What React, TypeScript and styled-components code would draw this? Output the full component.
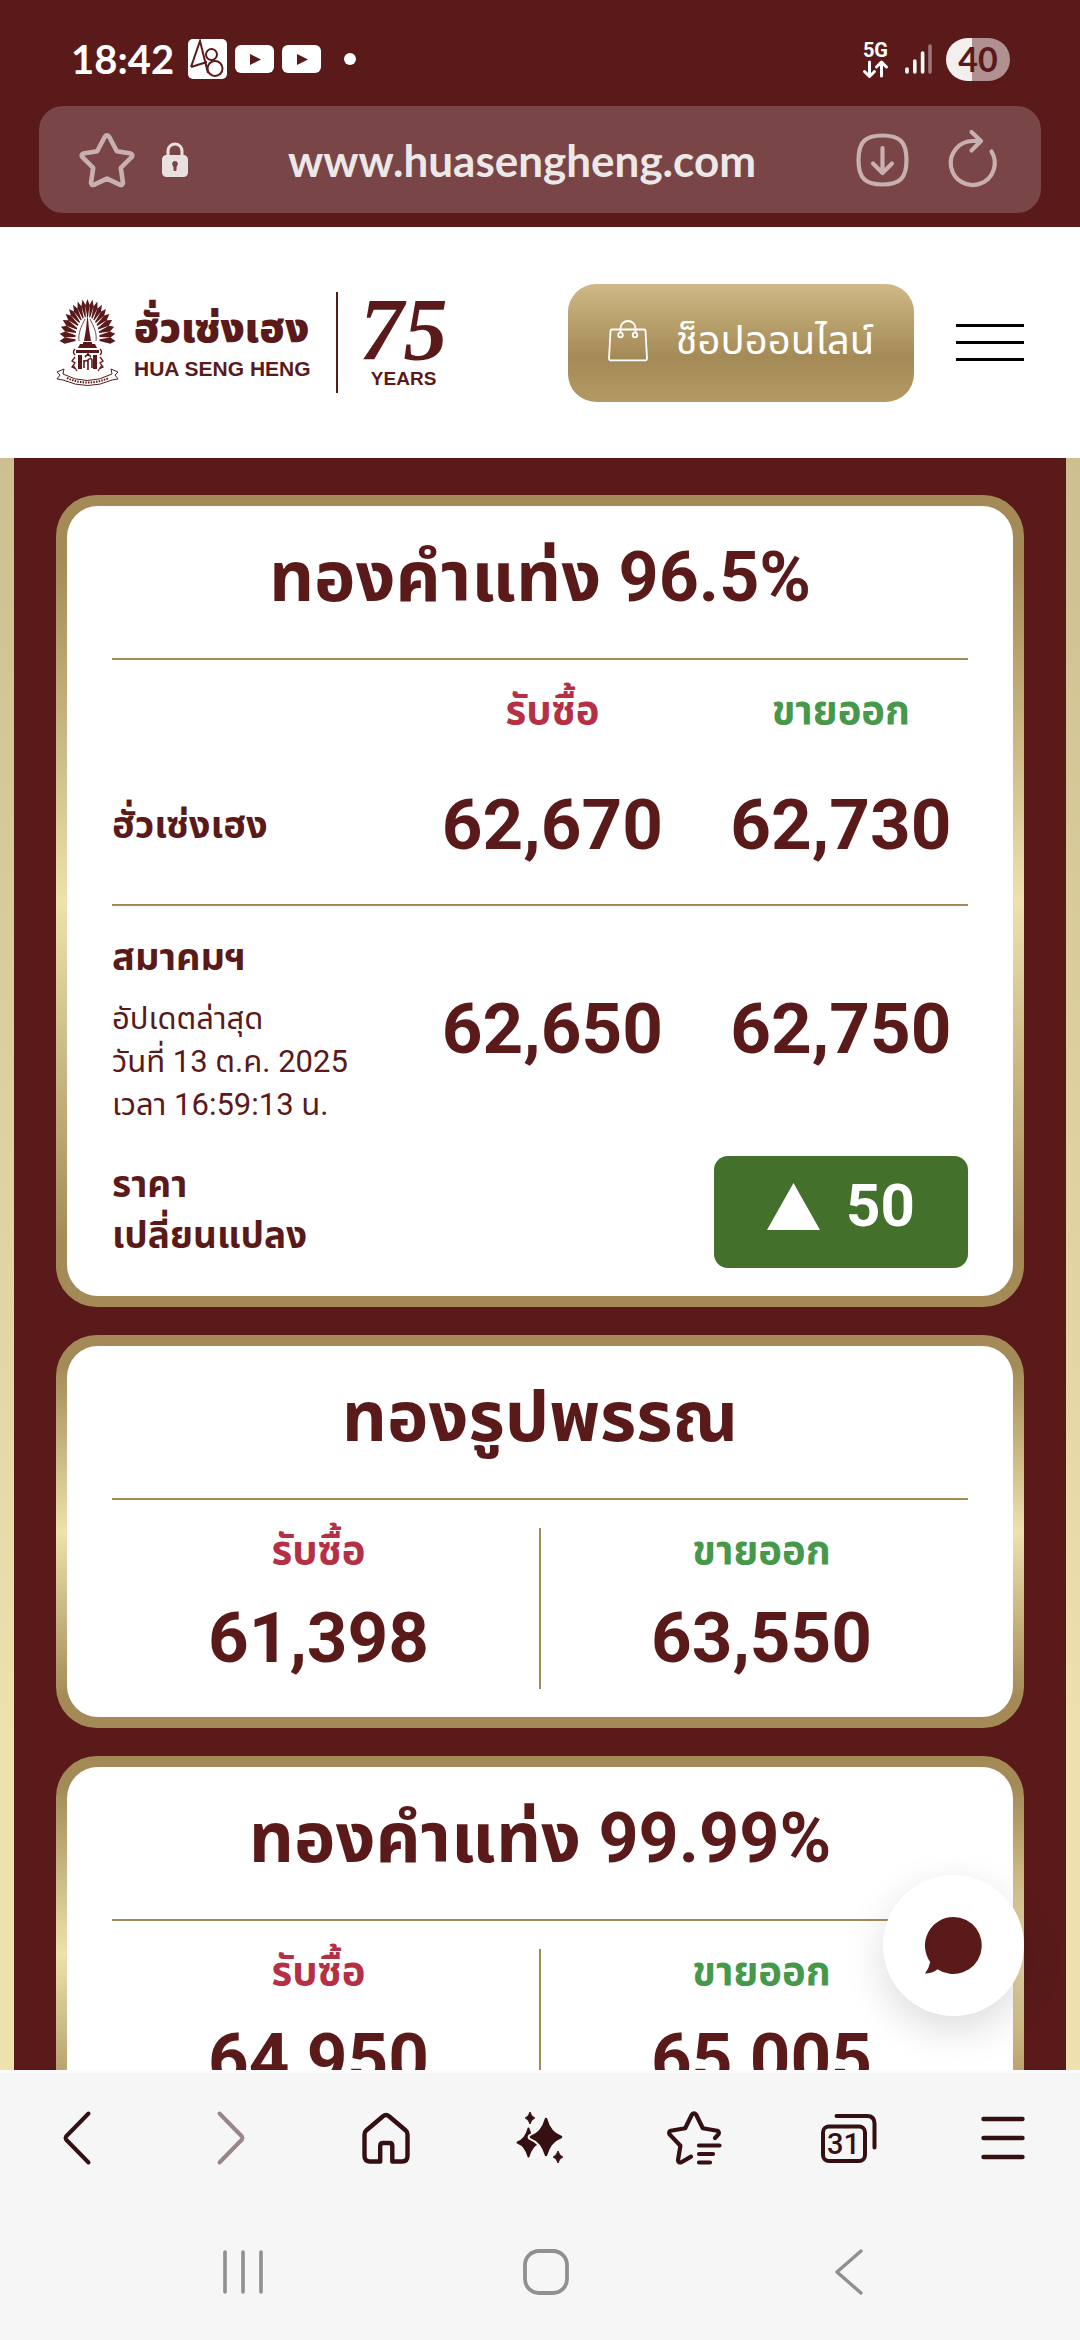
import React from "react";
import styled, { createGlobalStyle } from "styled-components";

const color = {
  maroon: "#5a1a1a",
  gold: "#a48a56",
  goldLight: "#eee1ae",
  buy: "#b53044",
  sell: "#46984a",
  badge: "#43702b",
  bar: "#f6f6f6",
  ink: "#351012",
  system: "#909090",
};

const textFont = `Roboto, "Noto Sans Thai", "Noto Sans", sans-serif`;

const GlobalStyle = createGlobalStyle`
  *, *::before, *::after { box-sizing: border-box; }
  body { margin: 0; background: ${color.bar}; color: ${color.maroon}; font-family: ${textFont}; }
  button { border: 0; padding: 0; background: none; color: inherit; font: inherit; cursor: pointer; }
  a { color: inherit; text-decoration: none; }
  svg { display: block; flex: none; overflow: visible; }
  h2, p, dl, dd { margin: 0; }
`;

const Screen = styled.div`
  display: flex;
  flex-direction: column;
  height: 100vh;
  overflow: hidden;
`;

/* ---------- phone status bar and address bar ---------- */

const TopChrome = styled.header`
  background: ${color.maroon};
  padding: 0 39px 14px;
  flex: none;
`;

const StatusBar = styled.div`
  display: flex;
  align-items: center;
  height: 106px;
  padding: 12px 31px 0 32px;
  color: #fff;
`;

const Clock = styled.time`
  font: 700 40px/48px Lato, sans-serif;
`;

const Notices = styled.div`
  display: flex;
  align-items: center;
  gap: 8px;
  margin-left: 14px;
`;

const Dot = styled.span`
  width: 12px;
  height: 12px;
  margin-left: 15px;
  border-radius: 50%;
  background: #fff;
`;

const Signals = styled.div`
  display: flex;
  align-items: center;
  margin-left: auto;
`;

const Network = styled.div`
  display: flex;
  flex-direction: column;
  align-items: center;
  gap: 2px;
  margin-right: 17px;
  font: 700 20px/18px Roboto, sans-serif;
`;

const Battery = styled.div`
  width: 64px;
  height: 43px;
  margin-left: 14px;
  border-radius: 22px;
  background: linear-gradient(90deg, #f3efef 40%, #b09090 40%);
  color: ${color.maroon};
  font: 700 34px/42px Lato, sans-serif;
  text-align: center;
`;

const AddressBar = styled.div`
  display: flex;
  align-items: center;
  height: 107px;
  padding: 0 44px 0 41px;
  border-radius: 24px;
  background: #7a4546;
  color: #c8b0b0;
`;

const LockSlot = styled.span`
  margin-left: 28px;
  color: #e9e0e0;
`;

const Address = styled.span`
  flex: 1;
  color: #ece8e8;
  font: 700 44px/56px Lato, sans-serif;
  text-align: center;
`;

const AddressActions = styled.div`
  display: flex;
  align-items: center;
  gap: 40px;
`;

/* ---------- site header ---------- */

const SiteHeader = styled.div`
  display: flex;
  align-items: center;
  height: 231px;
  padding: 0 56px;
  background: #fff;
  flex: none;
`;

const Brand = styled.a`
  display: flex;
  align-items: center;
`;

const BrandName = styled.span`
  display: flex;
  flex-direction: column;
  margin-left: 15px;
  white-space: nowrap;
`;

const BrandThai = styled.span`
  font: 900 41px/52px "Noto Sans Thai", sans-serif;
`;

const BrandLatin = styled.span`
  font: 700 21px/28px "Liberation Sans", Arial, sans-serif;
`;

const Anniversary = styled.span`
  display: flex;
  flex-direction: column;
  align-items: center;
  height: 101px;
  margin-left: 25px;
  padding-left: 22px;
  border-left: 2px solid ${color.maroon};
`;

const AnniversaryNumber = styled.span`
  font: italic 700 88px/76px "Liberation Serif", "Times New Roman", serif;
`;

const AnniversaryLabel = styled.span`
  font: 700 19px/22px "Liberation Sans", Arial, sans-serif;
`;

const ShopButton = styled.a`
  display: flex;
  align-items: center;
  justify-content: center;
  gap: 28px;
  width: 346px;
  height: 118px;
  margin-left: auto;
  padding-bottom: 4px;
  border-radius: 28px;
  background: linear-gradient(#cfb986, #a48a56 62%, #b39a64);
  color: #fff;
  font-size: 40px;
  line-height: 52px;
  white-space: nowrap;
`;

const MenuButton = styled.button`
  display: grid;
  gap: 14px;
  width: 68px;
  margin-left: 42px;
`;

const MenuLine = styled.span`
  height: 3px;
  background: #000;
`;

/* ---------- prices ---------- */

const Viewport = styled.main`
  position: relative;
  flex: 1;
  min-height: 0;
  overflow: hidden;
  padding: 0 14px;
  background: linear-gradient(#cdbf8f, #eee1ae 80%);
`;

const Prices = styled.div`
  display: flex;
  flex-direction: column;
  gap: 28px;
  padding: 37px 42px;
  background: ${color.maroon};
`;

const CardFrame = styled.section`
  padding: 11px;
  border-radius: 41px;
  background: linear-gradient(${color.gold} 8%, ${color.goldLight} 50%, ${color.gold} 92%);
`;

const CardBody = styled.div`
  padding: 0 45px 28px;
  border-radius: 31px;
  background: #fff;
`;

const CardTitle = styled.h2`
  padding: 21px 0 31px;
  border-bottom: 2px solid ${color.gold};
  font-size: 70px;
  font-weight: 700;
  line-height: 100px;
  text-align: center;
  white-space: nowrap;
`;

const SideLabel = styled.span<{ $side: "buy" | "sell" }>`
  display: block;
  color: ${(p) => color[p.$side]};
  font-size: 40px;
  font-weight: 700;
  line-height: 46px;
  text-align: center;
`;

const Price = styled.span`
  display: block;
  font-size: 71px;
  font-weight: 700;
  line-height: 80px;
  text-align: center;
`;

const QuoteTable = styled.table`
  width: 100%;
  border-collapse: separate;
  border-spacing: 0;
  table-layout: fixed;
`;

const HeadCell = styled.th<{ $width: string }>`
  width: ${(p) => p.$width};
  padding: 28px 0 0;
`;

const NameCell = styled.th<{ $ruled?: boolean }>`
  padding: ${(p) => (p.$ruled ? "51px 0 39px" : "26px 0 30px")};
  border-bottom: ${(p) => (p.$ruled ? `2px solid ${color.gold}` : "0")};
  font-size: 38px;
  font-weight: 700;
  line-height: 50px;
  text-align: left;
  vertical-align: middle;
  white-space: nowrap;
`;

const PriceCell = styled.td<{ $ruled?: boolean }>`
  padding: ${(p) => (p.$ruled ? "51px 0 39px" : "26px 0 30px")};
  border-bottom: ${(p) => (p.$ruled ? `2px solid ${color.gold}` : "0")};
  vertical-align: middle;
`;

const Updated = styled.p`
  padding-top: 15px;
  font-size: 31px;
  font-weight: 400;
  line-height: 43px;
`;

const ChangeRow = styled.div`
  display: flex;
  align-items: center;
  justify-content: space-between;
`;

const ChangeLabel = styled.p`
  padding-bottom: 4px;
  font-size: 37px;
  font-weight: 700;
  line-height: 51px;
`;

const ChangeBadge = styled.p`
  display: flex;
  align-items: center;
  justify-content: center;
  gap: 26px;
  width: 254px;
  height: 112px;
  padding-bottom: 12px;
  border-radius: 14px;
  background: ${color.badge};
  color: #fff;
  font-size: 60px;
  font-weight: 700;
  line-height: 68px;
`;

const PairList = styled.dl`
  display: grid;
  grid-template-columns: 1fr 2px 1fr;
  margin: 28px -14px 0;
`;

const PairItem = styled.div`
  display: grid;
  gap: 24px;
  padding-bottom: 11px;
`;

const PairRule = styled.div`
  background: ${color.gold};
`;

const ChatButton = styled.button`
  position: absolute;
  right: 56px;
  bottom: 54px;
  display: grid;
  place-items: center;
  width: 141px;
  height: 141px;
  border-radius: 50%;
  background: #fff;
  box-shadow: 0 14px 42px rgba(0, 0, 0, 0.14);
  color: ${color.maroon};
`;

/* ---------- browser toolbar and system navigation ---------- */

const Toolbar = styled.nav`
  display: flex;
  align-items: center;
  height: 133px;
  border-top: 3px solid #fbfbfb;
  background: ${color.bar};
  color: ${color.ink};
  flex: none;
`;

const ToolButton = styled.button<{ $dim?: boolean }>`
  display: grid;
  flex: 1;
  place-items: center;
  height: 100%;
  color: ${(p) => (p.$dim ? "#9a8688" : "inherit")};
`;

const TabsIcon = styled.span`
  position: relative;
  display: block;
`;

const TabCount = styled.span`
  position: absolute;
  left: 0;
  bottom: 0;
  width: 46px;
  font: 500 29px/38px Roboto, sans-serif;
  text-align: center;
`;

const SystemNav = styled.nav`
  display: flex;
  align-items: center;
  height: 137px;
  padding: 0 80px 0 92px;
  background: ${color.bar};
  color: ${color.system};
  flex: none;
`;

/* ---------- drawings ---------- */

const stroke = (width: number) => ({
  fill: "none",
  stroke: "currentColor",
  strokeWidth: width,
  strokeLinecap: "round" as const,
  strokeLinejoin: "round" as const,
});

const AppNotice = () => (
  <svg width="39" height="40" viewBox="0 0 39 40">
    <rect width="39" height="40" rx="5" fill="#fff" />
    <g fill="none" stroke={color.maroon} strokeWidth="2">
      <path d="M3 28 12 2l8 32M3 28l16-5" />
      <circle cx="23.500" cy="15.500" r="5.500" />
      <circle cx="27" cy="29.500" r="7.500" />
    </g>
  </svg>
);

const VideoNotice = () => (
  <svg width="39" height="28" viewBox="0 0 39 28">
    <rect width="39" height="28" rx="6" fill="#fff" />
    <path d="M15 9v11l11-5.500z" fill={color.maroon} />
  </svg>
);

const DataArrows = () => (
  <svg width="25" height="17" viewBox="0 0 25 17" {...stroke(3)}>
    <path d="M6.500 1v14M1.500 10.500l5 5 5-5M18.500 15V1M13.500 6l5-5 5 5" />
  </svg>
);

const SignalBars = () => (
  <svg width="27" height="30" viewBox="0 0 27 30" {...stroke(3.6)}>
    <path d="M2 25v3M9.800 17v11M17.600 9v19" />
    <path d="M25 2v26" opacity=".4" />
  </svg>
);

const StarIcon = () => (
  <svg width="54" height="54" viewBox="0 0 54 54" {...stroke(4.6)}>
    <path d="M24.800 3.800q2.200-3 4.400 0l7.600 14.400 14 2.400q2.600 1 .8 3.600L40.800 34.800 43 50q-.4 2.800-3.400 1.600L27 45.600l-12.600 6q-3 1.200-3.400-1.600l2.200-15.200L2.400 24.200q-1.800-2.600.8-3.600l14-2.400z" />
  </svg>
);

const LockIcon = () => (
  <svg width="26" height="36" viewBox="0 0 26 36">
    <path d="M6 15V9a7 7 0 0 1 14 0v6" fill="none" stroke="currentColor" strokeWidth="3" />
    <path
      fillRule="evenodd"
      fill="currentColor"
      d="M4.500 13h17A4.500 4.500 0 0 1 26 17.500v13a4.500 4.500 0 0 1-4.500 4.500h-17A4.500 4.500 0 0 1 0 30.500v-13A4.500 4.500 0 0 1 4.500 13zM13 19a3 3 0 0 0-1.700 5.400l.4 4.600h2.600l.4-4.600A3 3 0 0 0 13 19z"
    />
  </svg>
);

const DownloadIcon = () => (
  <svg width="53" height="54" viewBox="0 0 53 54" {...stroke(4.200)}>
    <path d="M26.500 2.500C44 2.500 50.500 9 50.500 27S44 51.500 26.500 51.500 2.500 45 2.500 27 9 2.500 26.500 2.500z" />
    <path d="M26.500 15v25M17 30.500l9.500 9.500 9.500-9.500" />
  </svg>
);

const ReloadIcon = () => (
  <svg width="48" height="62" viewBox="0 0 48 62" {...stroke(4.200)}>
    <path d="M42.500 22.500A22 22 0 1 1 24 12h7.500M22.500 3 32 12l-9.500 9.500" />
  </svg>
);

const BagIcon = () => (
  <svg width="40" height="42" viewBox="0 0 40 42" fill="none" stroke="#fff" strokeWidth="1.800">
    <path d="M4 9.500h32q1.500 0 1.500 1.500L39 38.500q0 1.800-1.800 1.800H2.800Q1 40.300 1 38.500L2.500 11q0-1.500 1.500-1.500z" />
    <path d="M12.500 13V8.500a7.400 7.400 0 0 1 15 0V13" />
    <circle cx="12.500" cy="15" r="2.300" />
    <circle cx="27" cy="15" r="2.300" />
  </svg>
);

const feathers = Array.from({ length: 19 }, (_, i) => {
  const t = ((i - 9) / 9) * 1.62;
  const at = (rx: number, ry: number, d: number) =>
    `${(31.500 + rx * Math.sin(t + d)).toFixed(1)} ${(40 - ry * Math.cos(t + d)).toFixed(1)}`;
  return `M${at(12, 22, -0.04)}L${at(23, 34, -0.09)}L${at(28, 40, 0)}L${at(23, 34, 0.09)}L${at(12, 22, 0.04)}z`;
}).join("");

const Emblem = () => (
  <svg width="63" height="87" viewBox="0 0 63 87">
    <path d={feathers} fill={color.maroon} />
    <path
      d="M31.500 15 33 30l2 12h-7l2-12zM24 45h15l2 4H22zM20 51h23v3H20zM22 56h4v14h-4zM37 56h4v14h-4zM27 43h9v2h-9z"
      fill={color.maroon}
    />
    <g fill="none" stroke={color.maroon} strokeWidth="1.300">
      <path d="M29 20c-4 8-7 14-6 22M34 20c4 8 7 14 6 22" strokeWidth=".800" />
      <path d="M19 50q-3 3 0 6M44 50q3 3 0 6M19 58l-3 4 3 2-3 4 4 2M44 58l3 4-3 2 3 4-4 2M17 66l4 6M46 66l-4 6" />
      <path d="M28 61v8m0-6q3-3 4 0v7m0 1V61q3-3 4 0v8M29 58l3-3 3 3" strokeWidth="1.600" />
      <path d="M8 70l-1 5q24 13 49 0l-1-5 7 3-3 3 3 4-6 1q-24 11-49 0l-6-1 3-4-3-3z" strokeWidth="1" />
      <path d="M11 79q20 9 42 0" strokeWidth="2" strokeDasharray="1.500 1.200" />
    </g>
  </svg>
);

const UpTriangle = () => (
  <svg width="53" height="47" viewBox="0 0 53 47">
    <path d="M26.500 0 53 47H0z" fill="#fff" />
  </svg>
);

const ChatIcon = () => (
  <svg width="57" height="57" viewBox="0 0 57 57">
    <path
      d="M28.500 0a28.500 28.500 0 1 1-16 52.200Q7 56.500 0 56.500q4-5 5.200-11.500A28.500 28.500 0 0 1 28.500 0z"
      fill="currentColor"
    />
  </svg>
);

const BackIcon = () => (
  <svg width="28" height="54" viewBox="0 0 28 54" {...stroke(4)}>
    <path d="M25.500 2.500 3 25.500q-1 1.500 0 3l22.500 23" />
  </svg>
);

const ForwardIcon = () => (
  <svg width="28" height="54" viewBox="0 0 28 54" {...stroke(4)}>
    <path d="M2.500 2.500 25 25.500q1 1.500 0 3L2.500 51.500" />
  </svg>
);

const HomeIcon = () => (
  <svg width="48" height="51" viewBox="0 0 48 51" {...stroke(4.400)}>
    <path d="M18.200 48.500H8Q2.500 48.500 2.500 43V21.500q0-2.500 2-4.300L21 3.200q3-2.200 6 0l16.500 14q2 1.800 2 4.300V43q0 5.500-5.500 5.500H30.300V33q0-3-3-3h-6.100q-3 0-3 3z" />
  </svg>
);

const sparkle = (x: number, y: number, rx: number, ry: number) => {
  const k = 0.24;
  return `M${x} ${y - ry}Q${x + rx * k} ${y - ry * k} ${x + rx} ${y}Q${x + rx * k} ${y + ry * k} ${x} ${y + ry}Q${x - rx * k} ${y + ry * k} ${x - rx} ${y}Q${x - rx * k} ${y - ry * k} ${x} ${y - ry}z`;
};

const SparkleIcon = () => (
  <svg width="48" height="54" viewBox="0 0 48 54">
    <g fill="currentColor" stroke="currentColor" strokeLinejoin="round">
      <path d={sparkle(12.500, 31.500, 11, 14)} strokeWidth="2" />
      <path d={sparkle(30, 26, 15, 18)} stroke={color.bar} strokeWidth="6.500" />
      <path d={sparkle(30, 26, 15, 18)} strokeWidth="2.600" />
      <path d={sparkle(14, 7, 4.800, 6)} strokeWidth="1" />
      <path d={sparkle(42, 46, 4.800, 6)} strokeWidth="1" />
    </g>
  </svg>
);

const BookmarksIcon = () => (
  <svg width="54" height="54" viewBox="0 0 54 54" {...stroke(4.200)}>
    <path d="M48 27l3.400-3.600q1.400-2.600-1.200-3.600l-14.400-2.600-6.600-13.400q-2.200-3-4.400 0l-6.600 13.400L3.800 19.800q-2.600 1-1.200 3.600L13.400 34.800 11 49.200q.4 3 3.400 2l9.600-5.600M32 34.500h20.500M32 43h14M32 51.500h11" />
  </svg>
);

const TabsOutline = () => (
  <svg width="56" height="49" viewBox="0 0 56 49" {...stroke(4)}>
    <rect x="2" y="12.500" width="42" height="34.500" rx="6" />
    <path d="M15.500 2H46q7.500 0 7.500 7.500v24" />
  </svg>
);

const MoreIcon = () => (
  <svg width="44" height="44" viewBox="0 0 44 44" {...stroke(4.400)}>
    <path d="M2.500 3h39M2.500 22h39M2.500 41h39" />
  </svg>
);

const RecentsIcon = () => (
  <svg width="40" height="44" viewBox="0 0 40 44" {...stroke(3.600)}>
    <path d="M2 2v40M20 2v40M38 2v40" />
  </svg>
);

const SystemHomeIcon = () => (
  <svg width="46" height="46" viewBox="0 0 46 46" {...stroke(3.800)}>
    <rect x="2" y="2" width="42" height="42" rx="14" />
  </svg>
);

const SystemBackIcon = () => (
  <svg width="28" height="46" viewBox="0 0 28 46" {...stroke(3.400)}>
    <path d="M26 2 2 23l24 21" />
  </svg>
);

/* ---------- page ---------- */

const Pair = ({ title, buy, sell }: { title: string; buy: string; sell: string }) => (
  <CardFrame>
    <CardBody>
      <CardTitle>{title}</CardTitle>
      <PairList>
        <PairItem>
          <SideLabel as="dt" $side="buy">รับซื้อ</SideLabel>
          <Price as="dd">{buy}</Price>
        </PairItem>
        <PairRule />
        <PairItem>
          <SideLabel as="dt" $side="sell">ขายออก</SideLabel>
          <Price as="dd">{sell}</Price>
        </PairItem>
      </PairList>
    </CardBody>
  </CardFrame>
);

export default function App() {
  return (
    <Screen>
      <GlobalStyle />
      <TopChrome>
        <StatusBar>
          <Clock>18:42</Clock>
          <Notices>
            <AppNotice />
            <VideoNotice />
            <VideoNotice />
            <Dot />
          </Notices>
          <Signals>
            <Network>
              5G
              <DataArrows />
            </Network>
            <SignalBars />
            <Battery>40</Battery>
          </Signals>
        </StatusBar>
        <AddressBar>
          <button aria-label="Bookmark"><StarIcon /></button>
          <LockSlot><LockIcon /></LockSlot>
          <Address>www.huasengheng.com</Address>
          <AddressActions>
            <button aria-label="Download"><DownloadIcon /></button>
            <button aria-label="Reload"><ReloadIcon /></button>
          </AddressActions>
        </AddressBar>
      </TopChrome>

      <SiteHeader>
        <Brand href="#">
          <Emblem />
          <BrandName>
            <BrandThai>ฮั่วเซ่งเฮง</BrandThai>
            <BrandLatin>HUA SENG HENG</BrandLatin>
          </BrandName>
          <Anniversary>
            <AnniversaryNumber>75</AnniversaryNumber>
            <AnniversaryLabel>YEARS</AnniversaryLabel>
          </Anniversary>
        </Brand>
        <ShopButton href="#">
          <BagIcon />
          ช็อปออนไลน์
        </ShopButton>
        <MenuButton aria-label="Menu">
          <MenuLine />
          <MenuLine />
          <MenuLine />
        </MenuButton>
      </SiteHeader>

      <Viewport>
        <Prices>
          <CardFrame>
            <CardBody>
              <CardTitle>ทองคำแท่ง 96.5%</CardTitle>
              <QuoteTable>
                <thead>
                  <tr>
                    <HeadCell as="td" $width="32.6%" />
                    <HeadCell $width="37.7%"><SideLabel $side="buy">รับซื้อ</SideLabel></HeadCell>
                    <HeadCell $width="29.7%"><SideLabel $side="sell">ขายออก</SideLabel></HeadCell>
                  </tr>
                </thead>
                <tbody>
                  <tr>
                    <NameCell scope="row" $ruled>ฮั่วเซ่งเฮง</NameCell>
                    <PriceCell $ruled><Price>62,670</Price></PriceCell>
                    <PriceCell $ruled><Price>62,730</Price></PriceCell>
                  </tr>
                  <tr>
                    <NameCell scope="row">
                      สมาคมฯ
                      <Updated>
                        อัปเดตล่าสุด<br />
                        วันที่ 13 ต.ค. 2025<br />
                        เวลา 16:59:13 น.
                      </Updated>
                    </NameCell>
                    <PriceCell><Price>62,650</Price></PriceCell>
                    <PriceCell><Price>62,750</Price></PriceCell>
                  </tr>
                </tbody>
              </QuoteTable>
              <ChangeRow>
                <ChangeLabel>ราคา<br />เปลี่ยนแปลง</ChangeLabel>
                <ChangeBadge><UpTriangle />50</ChangeBadge>
              </ChangeRow>
            </CardBody>
          </CardFrame>
          <Pair title="ทองรูปพรรณ" buy="61,398" sell="63,550" />
          <Pair title="ทองคำแท่ง 99.99%" buy="64,950" sell="65,005" />
        </Prices>
        <ChatButton aria-label="Chat"><ChatIcon /></ChatButton>
      </Viewport>

      <Toolbar aria-label="Browser">
        <ToolButton aria-label="Back"><BackIcon /></ToolButton>
        <ToolButton aria-label="Forward" $dim><ForwardIcon /></ToolButton>
        <ToolButton aria-label="Home"><HomeIcon /></ToolButton>
        <ToolButton aria-label="Assist"><SparkleIcon /></ToolButton>
        <ToolButton aria-label="Bookmarks"><BookmarksIcon /></ToolButton>
        <ToolButton aria-label="Tabs">
          <TabsIcon>
            <TabsOutline />
            <TabCount>31</TabCount>
          </TabsIcon>
        </ToolButton>
        <ToolButton aria-label="More"><MoreIcon /></ToolButton>
      </Toolbar>
      <SystemNav aria-label="System">
        <ToolButton aria-label="Recent apps"><RecentsIcon /></ToolButton>
        <ToolButton aria-label="Home screen"><SystemHomeIcon /></ToolButton>
        <ToolButton aria-label="Go back"><SystemBackIcon /></ToolButton>
      </SystemNav>
    </Screen>
  );
}
